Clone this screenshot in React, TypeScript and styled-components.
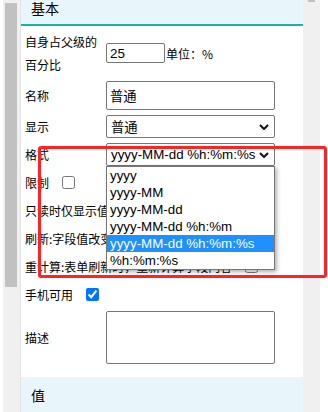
import React from 'react';
import styled, { createGlobalStyle } from 'styled-components';

const GlobalStyle = createGlobalStyle`
  html, body {
    margin: 0;
    background: #fff;
  }
  body {
    font-family: "Noto Sans CJK SC", "Liberation Sans", sans-serif;
  }
`;

const FORMATS = [
  'yyyy',
  'yyyy-MM',
  'yyyy-MM-dd',
  'yyyy-MM-dd %h:%m',
  'yyyy-MM-dd %h:%m:%s',
  '%h:%m:%s',
];

function Chevron() {
  return (
    <svg width='10' height='6' viewBox='0 0 10 6'>
      <path d='M1 1l4 4 4-4' fill='none' stroke='#111' strokeWidth='2' />
    </svg>
  );
}

function Select({ value, children }: { value: string; children?: React.ReactNode }) {
  return (
    <S.SelectWrap>
      <S.SelectBox>
        <span>{value}</span>
        <Chevron />
      </S.SelectBox>
      {children}
    </S.SelectWrap>
  );
}

export default function App() {
  return (
    <>
      <GlobalStyle />
      <S.Screen>
        <S.Gutter $width={3} />
        <S.Track $bordered>
          <S.Thumb $height={284} $top={3} />
        </S.Track>

        <S.Panel>
          <S.SectionHead $line>基本</S.SectionHead>
          <S.Form>
            <S.Label>
              自身占父级的
              <br />
              百分比
            </S.Label>
            <S.Field>
              <S.TextInput $width={59} $height={20} value='25' readOnly />
              <S.Unit>单位：%</S.Unit>
            </S.Field>

            <S.Label>名称</S.Label>
            <S.Field>
              <S.TextInput $height={29} value='普通' readOnly />
            </S.Field>

            <S.Label>显示</S.Label>
            <S.Field>
              <Select value='普通' />
            </S.Field>

            <S.Label>格式</S.Label>
            <S.Field>
              <Select value='yyyy-MM-dd %h:%m:%s'>
                <S.Options>
                  {FORMATS.map((f, i) => (
                    <S.Option key={f} $active={i === 4}>
                      {f}
                    </S.Option>
                  ))}
                </S.Options>
              </Select>
            </S.Field>

            <S.CheckRow>
              限制
              <S.Check type='checkbox' />
            </S.CheckRow>
            <S.CheckRow>
              只读时仅显示值
              <S.Check type='checkbox' />
            </S.CheckRow>
            <S.CheckRow>
              刷新:字段值改变时刷新
              <S.Check type='checkbox' />
            </S.CheckRow>
            <S.CheckRow>
              重计算:表单刷新时，重新计算字段内容
              <S.Check type='checkbox' />
            </S.CheckRow>
            <S.CheckRow>
              手机可用
              <S.Check type='checkbox' defaultChecked />
            </S.CheckRow>

            <S.Label>描述</S.Label>
            <S.Field>
              <S.TextArea readOnly />
            </S.Field>
          </S.Form>
          <S.SectionHead>值</S.SectionHead>
        </S.Panel>

        <S.Track>
          <S.Thumb $height={2} $top={0} $inset={5} $width={7} />
        </S.Track>
        <S.Gutter $width={8} />

        <S.Highlight />
      </S.Screen>
    </>
  );
}

const S = {
  Screen: styled.div`
    position: relative;
    display: flex;
    width: 328px;
    height: 412px;
    overflow: hidden;
    background: #fff;
  `,

  Gutter: styled.div<{ $width: number }>`
    flex: 0 0 ${({ $width }) => $width}px;
    background: #fff;
  `,

  Track: styled.div<{ $bordered?: boolean }>`
    flex: 0 0 17px;
    background: #f0f0f0;
    border-right: ${({ $bordered }) => ($bordered ? '1px solid #e4e4e4' : 'none')};
  `,

  Thumb: styled.div<{ $height: number; $top: number; $inset?: number; $width?: number }>`
    margin-top: ${({ $top }) => $top}px;
    margin-left: ${({ $inset = 2 }) => $inset}px;
    width: ${({ $width = 12 }) => $width}px;
    height: ${({ $height }) => $height}px;
    background: #c1c1c1;
  `,

  Panel: styled.div`
    flex: 0 0 282px;
    margin-top: -10px;
    background: #fff;
  `,

  SectionHead: styled.div<{ $line?: boolean }>`
    box-sizing: border-box;
    height: 36px;
    padding: 8px 10px 0;
    line-height: 20px;
    font-size: 14px;
    color: #000;
    background: #e8f5fb;
    border-bottom: 2px solid ${({ $line }) => ($line ? '#17b3a4' : 'transparent')};
  `,

  Form: styled.div`
    display: grid;
    grid-template-columns: 81px 169px;
    row-gap: 5px;
    padding: 4px 0 13px 4px;
    font-size: 12px;
    color: #000;
  `,

  Label: styled.div`
    display: flex;
    align-items: center;
    line-height: 23px;
  `,

  Field: styled.div`
    display: flex;
    align-items: center;
  `,

  TextInput: styled.input<{ $width?: number; $height: number }>`
    box-sizing: border-box;
    width: ${({ $width }) => ($width ? `${$width}px` : '100%')};
    height: ${({ $height }) => $height}px;
    margin: 0;
    padding: 0 3px;
    border: 1px solid #767676;
    border-radius: 2px;
    font: 13.33px "Liberation Sans", "Noto Sans CJK SC", sans-serif;
    color: #000;
    outline: none;
  `,

  Unit: styled.span`
    margin-left: 1px;
    white-space: nowrap;
  `,

  SelectWrap: styled.div`
    position: relative;
    width: 100%;
  `,

  SelectBox: styled.div`
    box-sizing: border-box;
    display: flex;
    align-items: center;
    justify-content: space-between;
    height: 23px;
    padding: 0 5px 0 4px;
    border: 1px solid #767676;
    border-radius: 2px;
    background: #fff;
    font: 13.33px "Liberation Sans", "Noto Sans CJK SC", sans-serif;
    color: #000;
    white-space: nowrap;
  `,

  Options: styled.ul`
    position: absolute;
    top: 100%;
    left: 0;
    z-index: 2;
    box-sizing: border-box;
    width: 100%;
    margin: 0;
    padding: 0;
    list-style: none;
    background: #fff;
    border: 1px solid #767676;
    box-shadow: 2px 2px 4px rgba(0, 0, 0, 0.3);
    font: 13.33px "Liberation Sans", sans-serif;
  `,

  Option: styled.li<{ $active?: boolean }>`
    height: 17px;
    line-height: 17px;
    padding-left: 3px;
    white-space: nowrap;
    color: ${({ $active }) => ($active ? '#fff' : '#000')};
    background: ${({ $active }) => ($active ? '#1e90ff' : 'transparent')};
  `,

  CheckRow: styled.div`
    grid-column: 1 / -1;
    display: flex;
    align-items: center;
    line-height: 23px;
    white-space: nowrap;
  `,

  Check: styled.input`
    width: 13px;
    height: 13px;
    margin: 0 0 0 13px;
  `,

  TextArea: styled.textarea`
    box-sizing: border-box;
    width: 100%;
    height: 53px;
    margin: 0;
    border: 1px solid #767676;
    border-radius: 2px;
    resize: none;
    outline: none;
  `,

  Highlight: styled.div`
    position: absolute;
    left: 38px;
    top: 146px;
    width: 289px;
    height: 132px;
    box-sizing: border-box;
    border: 3px solid #ff2323;
    border-radius: 3px;
    pointer-events: none;
    z-index: 5;
  `,
};
